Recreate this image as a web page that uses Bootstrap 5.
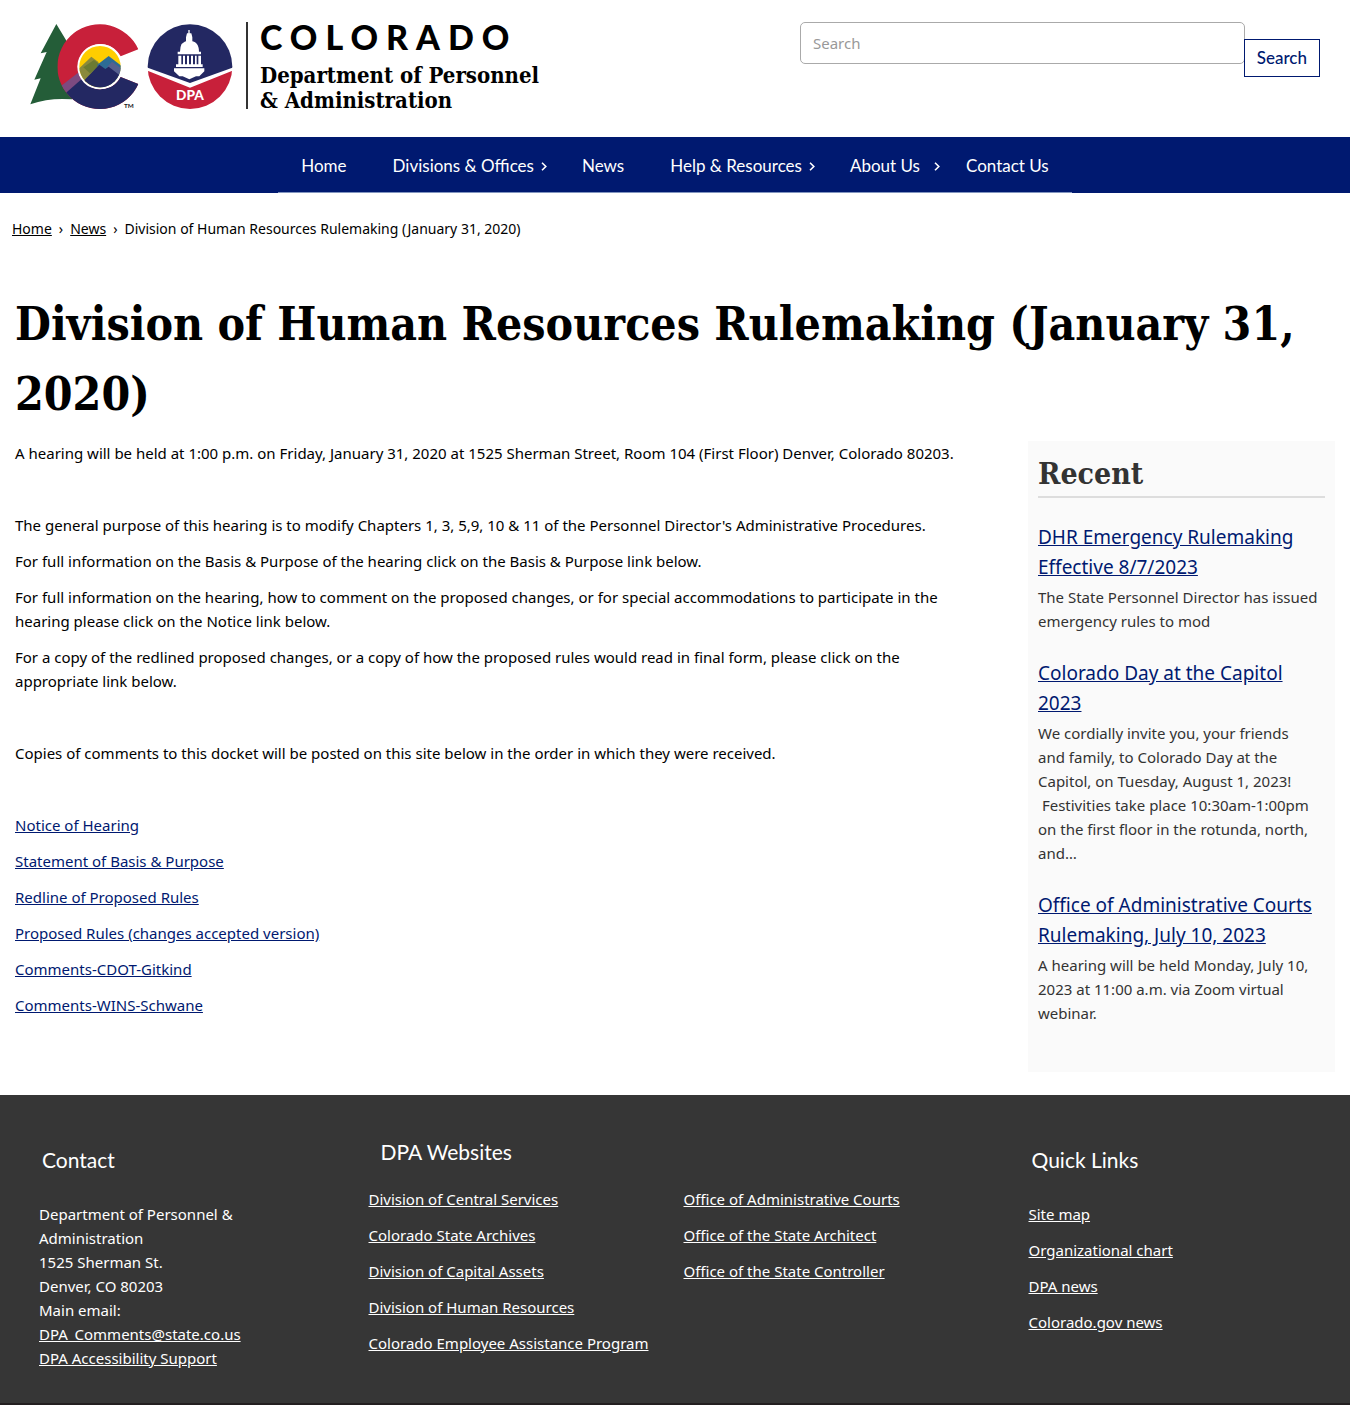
<!DOCTYPE html>
<html lang="en">
<head>
<meta charset="utf-8">
<meta name="viewport" content="width=device-width, initial-scale=1">
<title>Division of Human Resources Rulemaking (January 31, 2020)</title>
<link href="https://cdn.jsdelivr.net/npm/bootstrap@5.3.0/dist/css/bootstrap.min.css" rel="stylesheet">
<style>
:root { --navy: #001970; --slab: "DejaVu Serif Condensed", "DejaVu Serif", serif; --sans: Lato, sans-serif; --text: "Noto Sans", sans-serif; }
body { font-family: var(--text); font-size: 15px; line-height: 24px; color: #000; background: #fff; }
p { margin-bottom: 12px; }
.site-head { padding: 22px 30px 24px; }
.brand { color: #000; gap: 12px; }
.brand-rule { width: 2px; height: 87px; background: #333; }
.brand-state { font-family: var(--sans); font-weight: 900; font-size: 34px; line-height: 30px; letter-spacing: 8px; }
.brand-dept { font-family: var(--slab); font-weight: 700; font-size: 22px; line-height: 25px; margin-top: 11px; }
.search-form { width: 520px; max-width: 100%; }
.search-form .form-control { height: 42px; border: 1px solid #aaa; border-radius: 5px; font-size: 15px; color: #333; }
.search-form .form-control::placeholder { color: #999; }
.search-form .btn { margin: 17px 0 0 -1px; height: 38px; padding: 0 12px; border: 1px solid var(--navy); border-radius: 0; color: var(--navy); background: #fff; font-family: var(--sans); font-size: 17px; font-weight: 500; }
.main-nav { background: var(--navy); font-family: var(--sans); }
.main-nav .nav { border-bottom: 1px solid #8295bf; }
.main-nav .nav-link { color: #fff; font-size: 17px; line-height: 24px; padding: 17px 23px 14px; gap: 7px; }
.main-nav .has-menu { padding-right: 12px; }
.main-nav .about-menu { gap: 14px; padding-right: 3px; }
.crumbs { padding: 24px 12px 0; font-size: 14px; line-height: 24px; }
.crumbs .breadcrumb { gap: 7px; }
.crumbs a { color: #000; }
.page-body { padding: 48px 15px 23px; }
h1 { font-family: var(--slab); font-weight: 700; font-size: 46px; line-height: 70px; margin: 0 0 12px; }
.page-columns { gap: 32px; }
.article { min-width: 0; }
.article a, .recent a { color: var(--navy); }
.recent { width: 307px; background: #fafafa; color: #333; padding: 10px 10px 47px; }
.recent h2 { font-family: var(--slab); font-weight: 700; font-size: 30px; line-height: 45px; border-bottom: 2px solid #ddd; margin-bottom: 24px; }
.recent h3 { font-size: 19px; line-height: 30px; font-weight: 400; margin-bottom: 3px; }
.recent p { margin-bottom: 25px; }
.recent article:last-child p { margin-bottom: 0; }
.site-foot { background: #363636; color: #fff; border-bottom: 2px solid #231f20; padding: 38px 0 33px; }
.site-foot a { color: #fff; }
.site-foot h2 { font-family: var(--sans); font-size: 21px; line-height: 30px; font-weight: 400; }
.site-foot .side-title { padding: 12px 3px 0; margin-bottom: 27px; }
.site-foot .mid-title { padding: 4px 12px 0; margin-bottom: 20px; }
.foot-contact { padding-left: 39px; padding-right: 64px; }
.foot-sites { padding-left: 31px; padding-right: 14px; }
.foot-quick { padding-left: 16px; }
.site-foot li { margin-bottom: 12px; }
</style>
<script src="https://cdn.jsdelivr.net/npm/bootstrap@5.3.0/dist/js/bootstrap.bundle.min.js"></script>
</head>
<body>
<header class="site-head d-flex flex-wrap justify-content-between align-items-start">
  <a class="brand d-flex align-items-start text-decoration-none" href="#">
    <svg width="204" height="87" viewBox="30 36 612 261" role="img" aria-label="Colorado logo and DPA seal">
      <defs>
        <clipPath id="letterC"><path d="M355 118A127 127 0 1 0 355 222L302 201A68 68 0 1 1 302 139Z"/></clipPath>
        <clipPath id="disc"><circle cx="240" cy="170" r="62"/></clipPath>
        <clipPath id="seal"><circle cx="510" cy="170" r="127"/></clipPath>
      </defs>
      <path fill="#245d38" d="M109 42L147 105L138 104L166 165L156 268Q90 262 31 283L62 205L43 209L80 126L62 130Z"/>
      <g clip-path="url(#letterC)">
        <path fill="#c8203a" d="M100 30H380V310H100Z"/>
        <path fill="#7d4a80" d="M120 230L180 184L220 230L150 262Z"/>
        <path fill="#232862" d="M134 252L205 190L380 190V310H134Z"/>
      </g>
      <circle cx="240" cy="170" r="68" fill="#fff"/>
      <g clip-path="url(#disc)">
        <path fill="#ffcd00" d="M170 100H310V240H170Z"/>
        <path fill="#8a8a3c" d="M160 192L214 140L235 156L250 240H160Z"/>
        <path fill="#6b7a32" d="M190 172L222 150L242 166L210 190Z"/>
        <path fill="#2d6c95" d="M232 164L266 138L310 172V240H232Z"/>
        <path fill="#56608f" d="M262 170L276 155L310 180V210Z"/>
        <path fill="#232862" d="M165 240L238 164L256 177L266 170L315 208V240Z"/>
      </g>
      <text x="312" y="293" font-family="Lato, sans-serif" font-weight="700" font-size="19" fill="#222">TM</text>
      <g clip-path="url(#seal)">
        <path fill="#232862" d="M380 40H640V172L510 219L380 172Z"/>
        <path fill="#c8203a" d="M380 181L510 233L640 181V300H380Z"/>
      </g>
      <g fill="#fff">
        <path d="M505 60h4v10h-4zM501 70h13l3 12v12h-19V82zM480 125Q480 92 507 92Q537 92 537 125ZM473 125h70v8h-70z"/>
        <path d="M475 137h9v26h-9zM489 137h6v26h-6zM501 137h6v26h-6zM513 137h6v26h-6zM525 137h5v26h-5zM535 137h8v26h-8zM468 163h80v8h-80zM462 175h91v9l-15 15h-10l-20 9l-20-9h-10l-16-15z"/>
      </g>
      <text x="510" y="270" text-anchor="middle" font-family="Lato, sans-serif" font-weight="900" font-size="41" fill="#fff">DPA</text>
    </svg>
    <span class="brand-rule"></span>
    <span class="d-flex flex-column"><span class="brand-state">COLORADO</span><span class="brand-dept">Department of Personnel<br>&amp; Administration</span></span>
  </a>
  <form class="search-form d-flex align-items-start" role="search">
    <input class="form-control" id="site-search" type="search" placeholder="Search" aria-label="Search">
    <button class="btn" type="submit">Search</button>
  </form>
</header>

<nav class="main-nav d-flex justify-content-center" aria-label="Main">
  <ul class="nav">
    <li class="nav-item"><a class="nav-link" href="#">Home</a></li>
    <li class="nav-item"><a class="nav-link has-menu d-flex align-items-center" href="#">Divisions &amp; Offices <svg width="6" height="9" viewBox="0 0 6 9" fill="none" stroke="#fff" stroke-width="1.6" aria-hidden="true"><path d="M1 .8L4.8 4.5L1 8.2"/></svg></a></li>
    <li class="nav-item"><a class="nav-link" href="#">News</a></li>
    <li class="nav-item"><a class="nav-link has-menu d-flex align-items-center" href="#">Help &amp; Resources <svg width="6" height="9" viewBox="0 0 6 9" fill="none" stroke="#fff" stroke-width="1.6" aria-hidden="true"><path d="M1 .8L4.8 4.5L1 8.2"/></svg></a></li>
    <li class="nav-item"><a class="nav-link about-menu d-flex align-items-center" href="#">About Us <svg width="6" height="9" viewBox="0 0 6 9" fill="none" stroke="#fff" stroke-width="1.6" aria-hidden="true"><path d="M1 .8L4.8 4.5L1 8.2"/></svg></a></li>
    <li class="nav-item"><a class="nav-link" href="#">Contact Us</a></li>
  </ul>
</nav>

<nav class="crumbs" aria-label="Breadcrumb">
  <ol class="breadcrumb mb-0">
    <li><a href="#">Home</a></li><li aria-hidden="true">›</li>
    <li><a href="#">News</a></li><li aria-hidden="true">›</li>
    <li aria-current="page">Division of Human Resources Rulemaking (January 31, 2020)</li>
  </ol>
</nav>

<main class="page-body">
  <h1>Division of Human Resources Rulemaking (January 31, 2020)</h1>
  <div class="page-columns d-flex flex-column flex-lg-row">
    <div class="article flex-fill">
      <p>A hearing will be held at 1:00 p.m. on Friday, January 31, 2020 at 1525 Sherman Street, Room 104 (First Floor) Denver, Colorado 80203.</p>
      <p>&nbsp;</p>
      <p>The general purpose of this hearing is to modify Chapters 1, 3, 5,9, 10 &amp; 11 of the Personnel Director's Administrative Procedures.</p>
      <p>For full information on the Basis &amp; Purpose of the hearing click on the Basis &amp; Purpose link below.</p>
      <p>For full information on the hearing, how to comment on the proposed changes, or for special accommodations to participate in the hearing please click on the Notice link below.</p>
      <p>For a copy of the redlined proposed changes, or a copy of how the proposed rules would read in final form, please click on the <br class="d-none d-lg-inline">appropriate link below.</p>
      <p>&nbsp;</p>
      <p>Copies of comments to this docket will be posted on this site below in the order in which they were received.</p>
      <p>&nbsp;</p>
      <p><a href="#">Notice of Hearing</a></p>
      <p><a href="#">Statement of Basis &amp; Purpose</a></p>
      <p><a href="#">Redline of Proposed Rules</a></p>
      <p><a href="#">Proposed Rules (changes accepted version)</a></p>
      <p><a href="#">Comments-CDOT-Gitkind</a></p>
      <p><a href="#">Comments-WINS-Schwane</a></p>
    </div>
    <aside class="recent flex-shrink-0">
      <h2>Recent</h2>
      <article><h3><a href="#">DHR Emergency Rulemaking Effective 8/7/2023</a></h3>
        <p>The State Personnel Director has issued emergency rules to mod</p></article>
      <article><h3><a href="#">Colorado Day at the Capitol 2023</a></h3>
        <p>We cordially invite you, your friends<br>and family, to Colorado Day at the Capitol, on Tuesday, August 1, 2023! &nbsp;Festivities take place 10:30am-1:00pm on the first floor in the rotunda, north, and…</p></article>
      <article><h3><a href="#">Office of Administrative Courts Rulemaking, July 10, 2023</a></h3>
        <p>A hearing will be held Monday, July 10, 2023 at 11:00 a.m. via Zoom virtual webinar.</p></article>
    </aside>
  </div>
</main>

<footer class="site-foot">
  <div class="row g-0">
    <section class="foot-contact col-md-3">
      <h2 class="side-title">Contact</h2>
      <address class="mb-0">Department of Personnel &amp; Administration<br>1525 Sherman St.<br>Denver, CO 80203<br>Main email:<br><a href="#">DPA_Comments@state.co.us</a><br><a href="#">DPA Accessibility Support</a></address>
    </section>
    <section class="foot-sites col-md-6">
      <h2 class="mid-title">DPA Websites</h2>
      <div class="row g-0">
        <ul class="col-6 list-unstyled mb-0">
          <li><a href="#">Division of Central Services</a></li>
          <li><a href="#">Colorado State Archives</a></li>
          <li><a href="#">Division of Capital Assets</a></li>
          <li><a href="#">Division of Human Resources</a></li>
          <li><a href="#">Colorado Employee Assistance Program</a></li>
        </ul>
        <ul class="col-6 list-unstyled mb-0">
          <li><a href="#">Office of Administrative Courts</a></li>
          <li><a href="#">Office of the State Architect</a></li>
          <li><a href="#">Office of the State Controller</a></li>
        </ul>
      </div>
    </section>
    <section class="foot-quick col-md-3">
      <h2 class="side-title">Quick Links</h2>
      <ul class="list-unstyled mb-0">
        <li><a href="#">Site map</a></li>
        <li><a href="#">Organizational chart</a></li>
        <li><a href="#">DPA news</a></li>
        <li><a href="#">Colorado.gov news</a></li>
      </ul>
    </section>
  </div>
</footer>
</body>
</html>
